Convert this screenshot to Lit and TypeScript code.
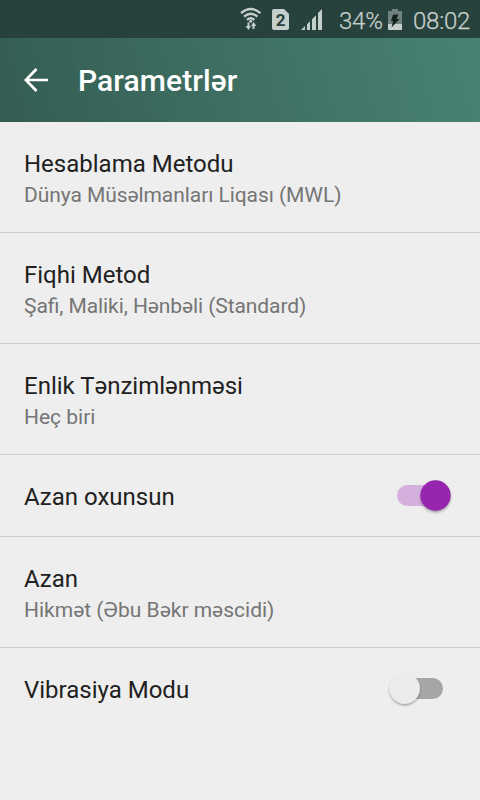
import { LitElement, html, css, svg } from "lit";
import { customElement } from "lit/decorators.js";

interface Row { title: string; sub?: string; on?: boolean; tracking?: number }

const rows: Row[] = [
  { title: "Hesablama Metodu", sub: "Dünya Müsəlmanları Liqası (MWL)", tracking: -0.07 },
  { title: "Fiqhi Metod", sub: "Şafi, Maliki, Hənbəli (Standard)", tracking: -0.08 },
  { title: "Enlik Tənzimlənməsi", sub: "Heç biri" },
  { title: "Azan oxunsun", on: true },
  { title: "Azan", sub: "Hikmət (Əbu Bəkr məscidi)" },
  { title: "Vibrasiya Modu", on: false },
];

@customElement("app-root")
export class AppRoot extends LitElement {
  static styles = css`
    :host { display: block; height: 800px; background: #eee; font-family: Roboto, sans-serif; overflow: hidden; }
    .top { background: linear-gradient(75deg, #345d52, #488374); color: #fff; }
    .status { height: 38px; background: #27423c; display: flex; align-items: center; justify-content: flex-end; padding-right: 10px; box-sizing: border-box; color: #c9d1cf; font-size: 24px; font-weight: 300; letter-spacing: -.25px; -webkit-text-stroke: .25px #c4cecb; }
    .icons { display: block; width: 90px; height: 38px; margin-right: 9px; }
    .battery { display: block; width: 16px; height: 38px; margin: 0 10px 0 5px; }
    .status span { padding-top: 3px; white-space: nowrap; }
    .percent { width: 43px; }
    .clock { width: 57px; }
    .digit { font-size: 17px; font-weight: 700; fill: #27423c; stroke: none; -webkit-text-stroke: 0; }
    .bar { height: 84px; display: flex; align-items: center; padding-left: 24px; }
    .back { display: block; width: 24px; height: 24px; margin-right: 30px; }
    .bar h1 { margin: 0; padding-top: 1px; font-size: 30px; font-weight: 500; line-height: 36px; letter-spacing: .1px; }
    .row { box-sizing: border-box; height: 111px; padding: 25px 24px 0; border-bottom: 1px solid #cfcfcf; }
    .row.toggle { height: 82px; display: flex; justify-content: space-between; }
    .row:last-child { border: 0; }
    .title { font-size: 24px; line-height: 34px; color: #212121; }
    .sub { font-size: 21px; line-height: 28px; color: #757575; font-feature-settings: "liga" 1; }
    .switch { display: block; width: 72px; height: 40px; margin: -5px -1px 0 0; }
  `;

  toggle(on: boolean) {
    const cx = on ? 50.5 : 19.7;
    return html`<svg class="switch" viewBox="0 0 72 40">
      <defs><filter id="s" x="-30%" y="-30%" width="160%" height="160%"><feDropShadow dx="0" dy="1.5" stdDeviation="1.2" flood-opacity=".35"/></filter></defs>
      ${on ? svg`<rect x="12" y="10" width="46" height="21" rx="10.5" fill="#d4b0dc"/>` : svg`<rect x="12" y="10" width="46" height="21" rx="10.5" fill="#a6a6a6"/>`}
      <circle cx=${cx} cy="20.5" r="15.2" fill=${on ? "#9627ae" : "#ececec"} filter="url(#s)"/>
    </svg>`;
  }

  render() {
    return html`
      <div class="top">
        <div class="status">
          <svg class="icons" viewBox="240 0 90 38">
            <g fill="none" stroke="#c4cecb" stroke-width="2.3">
              <path d="M241 13.2Q250.700 4.800 260.400 13.200M244 16.700Q250.700 10.700 257.400 16.700M247 19.900Q250.700 16.700 254.400 19.900"/>
              <path d="M248.500 22.500v5M253.500 29v-5" stroke-width="2"/>
            </g>
            <g fill="#c4cecb">
              <circle cx="250.700" cy="21.200" r="1.500"/>
              <path d="M245.500 26h5.500l-2.500 4zM251 26h5.500l-3-4z"/>
              <path d="M274 9h10l5 5v14a2 2 0 0 1-2 2h-13a2 2 0 0 1-2-2V11a2 2 0 0 1 2-2z"/>
              <path d="M301 30l4-4v4zM307 24.300l3-3V30h-3zM312 19.200l4-4V30h-4zM318 13l4-4v21h-4z"/>
            </g>
            <text class="digit" x="275.700" y="26">2</text>
          </svg>
          <span class="percent">34%</span>
          <svg class="battery" viewBox="387 0 16 38">
            <path d="M392 9h6v2h4v13h-14V11h4z" fill="#6f827d"/>
            <path d="M388 24h14v6h-14z" fill="#c4cecb"/>
            <path d="M393 14.500h5.500l-2 4.500h3l-8 8.500 1.500-6.500H391z" fill="#142320"/>
          </svg>
          <span class="clock">08:02</span>
        </div>
        <div class="bar">
          <svg class="back" viewBox="0 0 24 24"><path d="M24 12H3M12.500 1L1.800 12l10.700 11" fill="none" stroke="#fff" stroke-width="2.700"/></svg>
          <h1>Parametrlər</h1>
        </div>
      </div>
      ${rows.map(r => html`<div class="row ${r.sub ? "" : "toggle"}">
        <div class="title">${r.title}</div>
        ${r.sub ? html`<div class="sub" style="letter-spacing:${r.tracking ?? 0}px">${r.sub}</div>` : this.toggle(!!r.on)}
      </div>`)}
    `;
  }
}
